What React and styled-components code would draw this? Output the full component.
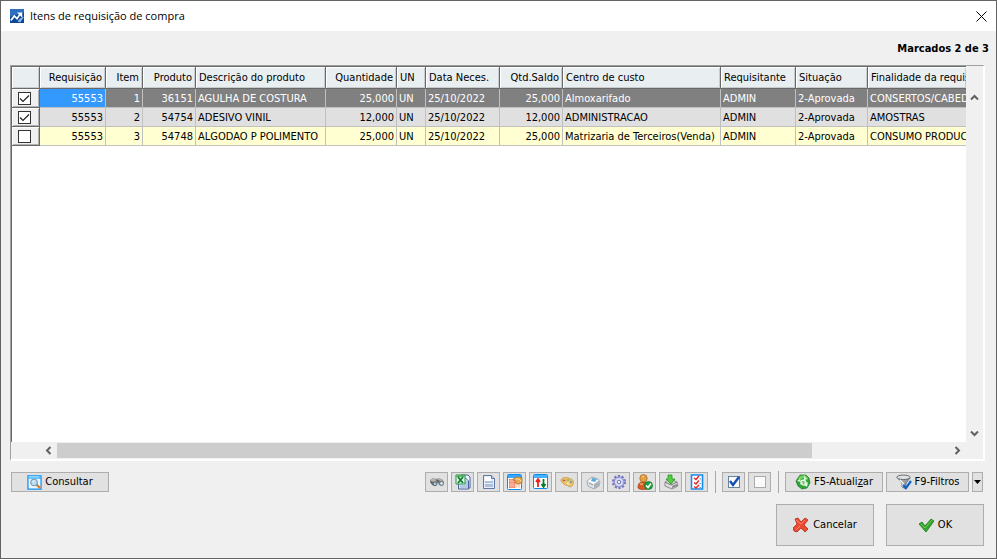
import React, { useState } from "react";
import styled, { createGlobalStyle } from "styled-components";

const GlobalStyle = createGlobalStyle`
  * { box-sizing: border-box; }
  body {
    margin: 0;
    background: #f0f0f0;
    color: #000;
    font-family: "DejaVu Sans Condensed", "DejaVu Sans", Tahoma, sans-serif;
    font-size: 11px;
    line-height: 14px;
  }
  button, input { font: inherit; color: inherit; margin: 0; }
`;

const Window = styled.div`
  display: flex;
  flex-direction: column;
  min-height: 100vh;
  background: #f0f0f0;
  border: 1px solid #636363;
`;

const TitleBar = styled.header`
  display: flex;
  align-items: center;
  gap: 6px;
  height: 30px;
  padding: 0 0 0 9px;
  background: #fff;
`;

const Title = styled.h1`
  flex: 1;
  margin: 0;
  font: 400 11px/16px "Open Sans", "Noto Sans", sans-serif;
`;

const CloseButton = styled.button`
  display: flex;
  align-items: center;
  justify-content: center;
  width: 30px;
  height: 30px;
  padding: 0;
  border: 0;
  background: transparent;
`;

const Content = styled.main`
  display: flex;
  flex: 1;
  flex-direction: column;
  padding: 0 12px 12px 10px;
`;

const Summary = styled.p`
  margin: 0 -5px 0 0;
  padding: 11px 0 9px;
  text-align: right;
  font-weight: 700;
`;

const GridFrame = styled.section`
  display: grid;
  flex: 1;
  grid-template-columns: minmax(0, 1fr) 17px;
  grid-template-rows: minmax(0, 1fr) 17px;
  margin: 0 -1px;
  border: solid;
  border-width: 1px 2px 2px 1px;
  border-color: #a0a0a0 #fff #fff #a0a0a0;
  background: #f0f0f0;
`;

const GridView = styled.div`
  overflow: hidden;
  background: #fff;
  border-top: 1px solid #696969;
  border-left: 1px solid #696969;
`;

const Table = styled.table`
  width: 100%;
  table-layout: fixed;
  border-collapse: separate;
  border-spacing: 0;
`;

const Column = styled.col`
  width: ${(p) => (p.$width ? `${p.$width}px` : "auto")};
`;

const HeaderCell = styled.th`
  height: 22px;
  padding: 1px 3px 0;
  overflow: hidden;
  white-space: nowrap;
  font-weight: 400;
  text-align: ${(p) => (p.$right ? "right" : "left")};
  background: #e9eef1;
  border-right: ${(p) => (p.$last ? "0" : "1px solid #696969")};
  border-bottom: 1px solid #696969;
  box-shadow: inset 1px 1px #fff, inset -1px -1px #c8cccf;
`;

const rowTones = {
  current: { back: "#808080", text: "#fff" },
  marked: { back: "#e0e0e0", text: "#000" },
  plain: { back: "#ffffd2", text: "#000" },
};

const Row = styled.tr`
  background: ${(p) => rowTones[p.$tone].back};
  color: ${(p) => rowTones[p.$tone].text};
`;

const Cell = styled.td`
  height: 19px;
  padding: 1px 2px 0;
  overflow: hidden;
  white-space: nowrap;
  text-align: ${(p) => (p.$right ? "right" : "left")};
  border-right: ${(p) => (p.$last ? "0" : "1px solid #c0c0c0")};
  border-bottom: 1px solid #c0c0c0;
  background: ${(p) => (p.$selected ? "#3399ff" : "transparent")};
`;

const MarkCell = styled.td`
  height: 19px;
  padding: 0;
  background: #f0f0f0;
  border-right: 1px solid #696969;
  border-bottom: 1px solid #696969;
  box-shadow: inset 1px 1px #fff, inset -1px -1px #b0b0b0;
`;

const MarkBox = styled.input`
  appearance: none;
  display: block;
  width: 13px;
  height: 13px;
  margin: 0 0 0 6px;
  border: 1px solid #333;
  background: #fff;
  &:checked {
    background: #fff
      url("data:image/svg+xml,%3Csvg xmlns='http://www.w3.org/2000/svg' viewBox='0 0 11 11'%3E%3Cpath d='M1 5.5 4 8.5 10 2.5' fill='none' stroke='%23222' stroke-width='1.2'/%3E%3C/svg%3E");
  }
`;

const VerticalBar = styled.div`
  display: flex;
  flex-direction: column;
  justify-content: space-between;
  padding-top: 23px;
`;

const HorizontalBar = styled.div`
  display: grid;
  grid-template-columns: 17px minmax(0, 1fr) 17px;
  margin-left: 29px;
`;

const Track = styled.div`
  padding: 1px 0;
`;

const Thumb = styled.div`
  width: 84.6%;
  height: 15px;
  background: #cdcdcd;
`;

const ArrowButton = styled.button`
  display: flex;
  align-items: center;
  justify-content: center;
  width: 17px;
  height: 17px;
  padding: 0;
  border: 0;
  background: transparent;
`;

const Toolbar = styled.div`
  display: flex;
  align-items: center;
  justify-content: space-between;
  margin-top: 10px;
`;

const Tools = styled.div`
  display: flex;
  align-items: center;
  gap: 3px;
  margin-right: 1px;
`;

const Separator = styled.span`
  width: 1px;
  height: 22px;
  margin: 0 3px 0 4px;
  background: #a8a8a8;
`;

const Button = styled.button`
  display: flex;
  align-items: center;
  justify-content: center;
  gap: ${(p) => (p.$large ? "4px" : "3px")};
  width: ${(p) => p.$width || 98}px;
  height: ${(p) => (p.$large ? 42 : 20)}px;
  padding: 0;
  white-space: nowrap;
  border: 1px solid #adadad;
  background: #e1e1e1;
  svg { flex: none; }
`;

const Footer = styled.footer`
  display: flex;
  justify-content: flex-end;
  gap: 12px;
  margin-top: 11px;
`;

const Svg = ({ size = 16, children }) => (
  <svg width={size} height={size} viewBox="0 0 16 16" fill="none" aria-hidden="true">
    {children}
  </svg>
);

const AppIcon = () => (
  <Svg size={14}>
    <path fill="#0b4796" d="M0 0h16v16H0z" />
    <path fill="#2f6fc0" d="M0 0h16v4L0 9z" />
    <path d="M1 13 5 8l3 3 4-6" stroke="#fff" strokeWidth="2" />
    <path d="M8 4h6v6z" fill="#fff" />
    <path d="M9 14c3 0 1-3 4-3m-2 4 4-6" stroke="#8db6e6" strokeWidth="1.6" />
  </Svg>
);

const Chevron = ({ d }) => (
  <svg width="9" height="9" viewBox="0 0 9 9" fill="none" aria-hidden="true">
    <path d={d} stroke="#606060" strokeWidth="2" />
  </svg>
);

const BinocularsIcon = () => (
  <Svg>
    <path d="M1 6 4 4l3 1 3-1 4 2 1 3-2 3-3-1-1-2-2 1-2 2-2-1-2-3z" fill="#85888a" />
    <path d="m1 6 3-2 3 2-1 2-3-1zm6-1 3-1 4 3-1 1-3-2z" fill="#b8b6af" />
    <path d="m2 8 2 2m4-4 2 2" stroke="#555" strokeWidth="1.3" />
    <ellipse cx="6" cy="9.8" rx="2" ry="1.9" fill="#a8cbe4" stroke="#5b646b" />
    <ellipse cx="12.5" cy="9.4" rx="2" ry="2" fill="#c9e2f2" stroke="#687078" />
  </Svg>
);

const ExcelIcon = () => (
  <Svg>
    <path d="M6 1h7l2 2v11H6z" fill="#eff6ff" stroke="#45659c" />
    <path d="M3.5 4h7l3 3v8h-10z" fill="#dae9fc" stroke="#45659c" />
    <path d="M10 8h3m-3 2h3m-8 2h8m-8 2h8" stroke="#8faad0" />
    <path d="M1 1h9v9H1z" fill="#e4f4e4" stroke="#279447" />
    <path d="M1 1h9v2H1z" fill="#58b368" />
    <path d="m3 3 5 6M8 3 3 9" stroke="#0b7d32" strokeWidth="1.8" />
  </Svg>
);

const PageIcon = () => (
  <Svg>
    <path d="M2.5 1.5h8l3 3v10h-11z" fill="#e5edf9" stroke="#6378a5" />
    <path d="M4 3h6v4H4z" fill="#fff" />
    <path d="M4 7h8v2H4zm0 3h8v3H4z" fill="#afc0df" />
    <path d="M10.5 1.5v3h3" fill="#c7d4eb" stroke="#6378a5" />
  </Svg>
);

const CalendarHandIcon = () => (
  <Svg>
    <rect x=".5" y=".5" width="14" height="15" rx="1" fill="#fff" stroke="#098af0" />
    <path d="M1 1h13v3H1z" fill="#37a9ff" />
    <path d="M2 5h6v9H2z" fill="#f16c52" />
    <path d="M4 5v9m2-9v9m3-4v4m3-4v4M2 7h6M2 10h11M2 12h11" stroke="#f8c2a9" />
    <path d="m6 5 3-2h3l3 1v5l-4 1-3-1 1-2-3-1z" fill="#e9a953" stroke="#a36a22" strokeWidth=".7" />
    <path d="m9 5 3 0 2 2" stroke="#ffe2a0" />
  </Svg>
);

const SortIcon = () => (
  <Svg>
    <rect x=".5" y=".5" width="14" height="14" rx="1" fill="#fff" stroke="#098af0" />
    <path d="M1 1h13v3H1z" fill="#48b2ff" />
    <path d="M5 13V6M3 8l2-3 2 3" stroke="#f21f20" strokeWidth="1.8" />
    <path d="M10.5 5v7m-2-2 2 3 2-3" stroke="#087e26" strokeWidth="1.8" />
  </Svg>
);

const PaletteIcon = () => (
  <Svg>
    <path d="M2 6C3 3 8 3 12 5c3 1 3 5 1 7-1 1-3 1-4 0-1-2-3 0-4-2C4 8 2 9 2 6z" fill="#efc66b" stroke="#c79445" strokeWidth=".8" />
    <ellipse cx="5" cy="6.5" rx="1.5" ry="1" fill="#bf6855" />
    <ellipse cx="9" cy="6" rx="1.5" ry="1" fill="#82b76d" />
    <circle cx="12" cy="8" r="1.2" fill="#6e9fc4" />
    <circle cx="9" cy="9.5" r="1" fill="#fff1b7" />
  </Svg>
);

const PrinterIcon = () => (
  <Svg>
    <path d="m2 7 5-4 6 2 2 3-1 4-5 3-6-3z" fill="#e0e4e8" stroke="#929aa3" strokeWidth=".8" />
    <path d="m3 7 4-3 6 2-4 4z" fill="#fff" />
    <path d="m7 4 5 1-2 3-4-1z" fill="#58a8dc" />
    <path d="m9 10 5-3v5l-5 3z" fill="#aab1b8" />
    <path d="m4 9 4 2" stroke="#8a939b" />
  </Svg>
);

const GearIcon = () => (
  <Svg>
    <circle cx="8" cy="8" r="6" stroke="#7777bd" strokeWidth="2.2" strokeDasharray="2.2 1.57" />
    <circle cx="8" cy="8" r="5" fill="#c0c2ef" stroke="#8184c8" />
    <circle cx="8" cy="8" r="3.2" stroke="#e7e8ff" />
    <circle cx="8" cy="8" r="1.7" fill="#f2f2fa" stroke="#7a7db9" />
  </Svg>
);

const UserIcon = () => (
  <Svg>
    <path d="M1 14c0-5 2-6 5-6s6 2 6 6c-2 2-9 2-11 0z" fill="#d65b28" stroke="#a53b16" strokeWidth=".7" />
    <circle cx="6.5" cy="4.3" r="3.7" fill="#e2a342" stroke="#a75c1c" strokeWidth=".7" />
    <path d="M5 2.5h2M3 10h3" stroke="#ffd186" />
    <circle cx="11.5" cy="11.5" r="4" fill="#19a33c" stroke="#087329" strokeWidth=".7" />
    <path d="m9 11.5 2 2 3-4" stroke="#fff" strokeWidth="1.5" />
  </Svg>
);

const ImportIcon = () => (
  <Svg>
    <path d="m2 8 5-3 7 3 1 4-6 3-7-3z" fill="#ddd" stroke="#777" strokeWidth=".8" />
    <path d="m2 8 6 3 6-3" stroke="#777" />
    <path d="m9 12 5-2v2l-5 2z" fill="#888" />
    <path d="M5 1h4v4h3l-4 5-5-5h2z" fill="#55ce44" stroke="#229425" strokeWidth=".8" />
  </Svg>
);

const ListIcon = () => (
  <Svg>
    <path d="M2.5 1h11v14h-11z" fill="#fff" stroke="#158df0" strokeWidth="1.6" />
    <path d="m5 4 2 1.5L10 2M5 8.5 7 10l3-3.5M5 12.5 7 14l3-3" stroke="#e22827" strokeWidth="1.5" />
    <path d="M10.5 5H12m-1.500 4.500H12M10.500 13.500H12" stroke="#6d93b5" />
  </Svg>
);

const MarkAllIcon = ({ checked }) => (
  <Svg>
    <rect x="2.5" y="2.5" width="11" height="11" fill="#fafafa" stroke={checked ? "#688296" : "#aaa"} />
    {checked && <path d="m4 7 3 4 6-8" stroke="#1250b7" strokeWidth="2.4" />}
  </Svg>
);

const RefreshIcon = () => (
  <Svg>
    <path d="M5 1h6l3 3 1 5-3 5-5 1-4-3-2-5z" fill="#2fa535" stroke="#147523" strokeWidth=".7" />
    <path d="m5 2 5-1 3 3-1 2-4-2-3 2-2-1z" fill="#76d163" />
    <path d="m5 10 1-4 4-1 2 4-3 3z" fill="#e5f7e1" />
    <path d="m2 7 3-2 1 3zm7-5 3 3-3 1zm4 6-1 5-3-2z" fill="#e5f7e1" />
    <path d="m7 7 2 0 1 2-2 2z" fill="#7bbd7b" />
  </Svg>
);

const FilterIcon = () => (
  <Svg>
    <path d="m1 3 5 6v4l4 2V9l4-5z" fill="#9a9fa3" stroke="#5b6166" strokeWidth=".8" />
    <ellipse cx="7.5" cy="3.3" rx="6.7" ry="2.2" fill="#dfe3e6" stroke="#656a70" />
    <path d="m4 6 3 3v4" stroke="#f9f9f9" strokeWidth="1.4" />
    <path d="m7 11 3 3 5-7" stroke="#1263c7" strokeWidth="2.2" />
  </Svg>
);

const SearchIcon = () => (
  <Svg size={15}>
    <path d="M1 1h14v14H1z" fill="#edf7ff" stroke="#0a91f5" strokeWidth="1.3" />
    <path d="M1 1h14v3H1z" fill="#45b6ff" />
    <path d="M2 2h11" stroke="#c5eaff" />
    <path d="m10 10 4 4" stroke="#df7d2c" strokeWidth="2.5" />
    <circle cx="7.5" cy="8" r="3.5" fill="#b9ddf0" stroke="#779bb3" strokeWidth="1.2" />
    <path d="M6 7.5 8 6" stroke="#fff" />
  </Svg>
);

const CancelIcon = () => (
  <Svg>
    <path d="M2 2 5 1l3 4 4-4 3 2-4 5 4 4-3 3-4-4-4 4-3-1-1-3 4-4z" fill="#ee4a32" stroke="#b42b19" strokeWidth=".8" />
    <path d="m3 3 5 4 4-4M3 13l4-4" stroke="#ff8b70" />
  </Svg>
);

const OkIcon = () => (
  <Svg>
    <path d="m1 7 3-2 3 4 6-7 3 2-8 11z" fill="#32a62d" stroke="#197719" strokeWidth=".8" />
    <path d="m3 7 4 4 7-8" stroke="#6bcc57" />
  </Svg>
);

const columns = [
  { title: "Requisição", width: 66, right: true },
  { title: "Item", width: 37, right: true },
  { title: "Produto", width: 53, right: true },
  { title: "Descrição do produto", width: 130 },
  { title: "Quantidade", width: 71, right: true },
  { title: "UN", width: 29 },
  { title: "Data Neces.", width: 74 },
  { title: "Qtd.Saldo", width: 63, right: true },
  { title: "Centro de custo", width: 158 },
  { title: "Requisitante", width: 75 },
  { title: "Situação", width: 72 },
  { title: "Finalidade da requisição" },
];

const rows = [
  { tone: "current", cells: ["55553", "1", "36151", "AGULHA DE COSTURA", "25,000", "UN", "25/10/2022", "25,000", "Almoxarifado", "ADMIN", "2-Aprovada", "CONSERTOS/CABEDAL"] },
  { tone: "marked", cells: ["55553", "2", "54754", "ADESIVO VINIL", "12,000", "UN", "25/10/2022", "12,000", "ADMINISTRACAO", "ADMIN", "2-Aprovada", "AMOSTRAS"] },
  { tone: "plain", cells: ["55553", "3", "54748", "ALGODAO P POLIMENTO", "25,000", "UN", "25/10/2022", "25,000", "Matrizaria de Terceiros(Venda)", "ADMIN", "2-Aprovada", "CONSUMO PRODUCAO"] },
];

const tools = [
  ["Localizar", BinocularsIcon],
  ["Exportar para Excel", ExcelIcon],
  ["Visualizar", PageIcon],
  ["Configurar colunas", CalendarHandIcon],
  ["Ordenar", SortIcon],
  ["Cores", PaletteIcon],
  ["Imprimir", PrinterIcon],
  ["Opções", GearIcon],
  ["Usuário", UserIcon],
  ["Importar", ImportIcon],
  ["Lista", ListIcon],
];

export default function App() {
  const [marked, setMarked] = useState([true, true, false]);
  const toggle = (index) => setMarked(marked.map((m, i) => (i === index ? !m : m)));
  const setAll = (value) => setMarked(marked.map(() => value));

  return (
    <>
      <GlobalStyle />
      <Window>
        <TitleBar>
          <AppIcon />
          <Title>Itens de requisição de compra</Title>
          <CloseButton aria-label="Fechar">
            <svg width="11" height="11" viewBox="0 0 11 11" aria-hidden="true">
              <path d="m.5.5 10 10m0-10-10 10" stroke="#000" />
            </svg>
          </CloseButton>
        </TitleBar>
        <Content>
          <Summary>Marcados {marked.filter(Boolean).length} de {marked.length}</Summary>
          <GridFrame>
            <GridView>
              <Table>
                <colgroup>
                  <Column $width={28} />
                  {columns.map((c) => <Column key={c.title} $width={c.width} />)}
                </colgroup>
                <thead>
                  <tr>
                    <HeaderCell aria-label="Marcado" />
                    {columns.map((c, i) => (
                      <HeaderCell key={c.title} $right={c.right} $last={i === columns.length - 1}>{c.title}</HeaderCell>
                    ))}
                  </tr>
                </thead>
                <tbody>
                  {rows.map((row, r) => (
                    <Row key={row.cells[1]} $tone={row.tone}>
                      <MarkCell>
                        <MarkBox type="checkbox" aria-label={`Marcar item ${r + 1}`} checked={marked[r]} onChange={() => toggle(r)} />
                      </MarkCell>
                      {row.cells.map((text, c) => (
                        <Cell key={columns[c].title} $right={columns[c].right} $selected={r === 0 && c === 0} $last={c === columns.length - 1}>{text}</Cell>
                      ))}
                    </Row>
                  ))}
                </tbody>
              </Table>
            </GridView>
            <VerticalBar>
              <ArrowButton aria-label="Rolar para cima"><Chevron d="M1 6.5 4.5 3 8 6.5" /></ArrowButton>
              <ArrowButton aria-label="Rolar para baixo"><Chevron d="M1 2.5 4.5 6 8 2.5" /></ArrowButton>
            </VerticalBar>
            <HorizontalBar>
              <ArrowButton aria-label="Rolar para a esquerda"><Chevron d="M6.5 1 3 4.5 6.5 8" /></ArrowButton>
              <Track><Thumb /></Track>
              <ArrowButton aria-label="Rolar para a direita"><Chevron d="M2.5 1 6 4.5 2.5 8" /></ArrowButton>
            </HorizontalBar>
          </GridFrame>
          <Toolbar>
            <Button><SearchIcon />Consultar</Button>
            <Tools>
              {tools.map(([label, Icon]) => (
                <Button key={label} $width={23} aria-label={label}><Icon /></Button>
              ))}
              <Separator />
              <Button $width={23} aria-label="Marcar todos" onClick={() => setAll(true)}><MarkAllIcon checked /></Button>
              <Button $width={23} aria-label="Desmarcar todos" onClick={() => setAll(false)}><MarkAllIcon /></Button>
              <Separator />
              <Button><RefreshIcon /><span>F5-Atuali<u>z</u>ar</span></Button>
              <Button $width={83}><FilterIcon />F9-Filtros</Button>
              <Button $width={11} aria-label="Mais filtros">
                <svg width="7" height="4" viewBox="0 0 7 4" aria-hidden="true"><path d="M0 0h7L3.500 4z" /></svg>
              </Button>
            </Tools>
          </Toolbar>
          <Footer>
            <Button $large><CancelIcon />Cancelar</Button>
            <Button $large><OkIcon />OK</Button>
          </Footer>
        </Content>
      </Window>
    </>
  );
}
